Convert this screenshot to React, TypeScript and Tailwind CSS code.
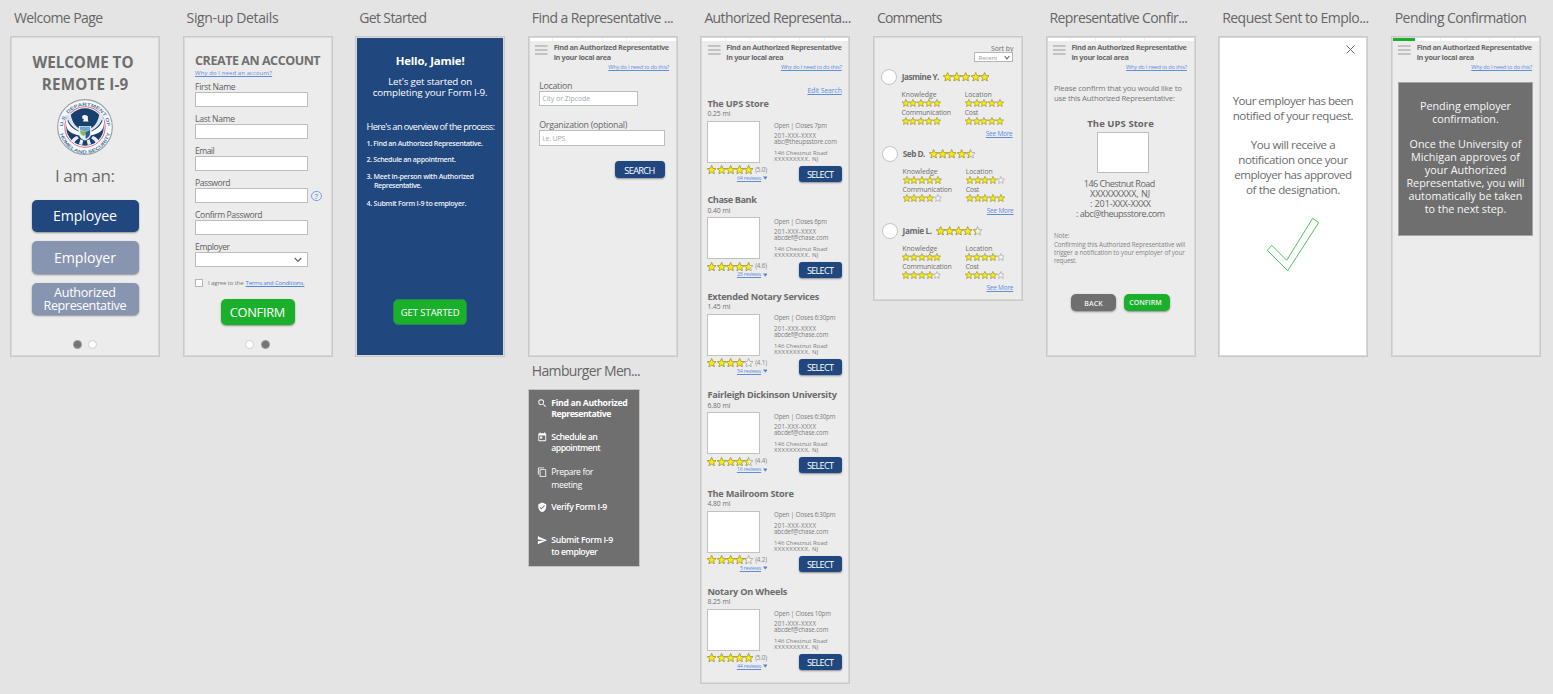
import React, { useLayoutEffect, useRef } from 'react';
import { MdSearch, MdToday, MdContentCopy, MdVerifiedUser, MdSend } from 'react-icons/md';

type LineProps = { w: number; className?: string; textClass?: string; children: React.ReactNode };

/* One line of text whose tracking is adjusted so that it spans w pixels. */
function Line({ w, className = '', textClass = '', children }: LineProps) {
  const ref = useRef<HTMLSpanElement>(null);
  useLayoutEffect(() => {
    const el = ref.current;
    if (!el) return;
    el.style.letterSpacing = '0px';
    el.style.marginRight = '0px';
    const n = (el.textContent || '').length;
    const spacing = (w - el.getBoundingClientRect().width) / Math.max(1, n - 1);
    el.style.letterSpacing = `${spacing}px`;
    el.style.marginRight = `${-spacing}px`;
  }, [w, children]);
  return (
    <div className={`flex shrink-0 items-center whitespace-nowrap leading-none ${className}`}>
      <span ref={ref} className={`pt-[0.8px] ${textClass}`}>{children}</span>
    </div>
  );
}

const STAR = 'M12 1.2l3.1 7.6 8.2.6-6.3 5.3 2 8-7-4.4-7 4.4 2-8L.7 9.4l8.2-.6z';

function Star({ fill, className }: { fill: number; className: string }) {
  return (
    <svg viewBox="0 0 24 24" className={`shrink-0 ${className}`}>
      <path d={STAR} fill="#f4f4f4" stroke="#8c8c86" strokeWidth="1.5" />
      {fill > 0 && (
        <svg x="0" y="0" width={24 * fill} height="24">
          <path d={STAR} fill="#fbea0c" stroke="#9a9430" strokeWidth="1.5" />
        </svg>
      )}
    </svg>
  );
}

function Stars({ value, className }: { value: number; className: string }) {
  return (
    <div className="flex items-center">
      {[0, 1, 2, 3, 4].map((i) => (
        <Star key={i} fill={Math.max(0, Math.min(1, value - i))} className={className} />
      ))}
    </div>
  );
}

function Artboard({ title, w, className, children }: { title: string; w: number; className: string; children: React.ReactNode }) {
  return (
    <div className="flex w-[150px] shrink-0 flex-col">
      <Line w={w} className="h-[36px] pl-[4px] text-[14px] text-[#666]">{title}</Line>
      <div className={`flex shrink-0 flex-col border border-[#c9c9c9] outline outline-1 -outline-offset-2 outline-[#d8d8d8] ${className}`}>{children}</div>
    </div>
  );
}

function Header({ active = false }: { active?: boolean }) {
  return (
    <div className="flex shrink-0 flex-col">
      <div className="flex h-[4px] bg-white">
        {[0, 1, 2, 3, 4, 5].map((i) => (
          <div key={i} className={`flex-1 border-r border-[#f1f1f1] ${active && i === 0 ? 'bg-[#1bb02b]' : 'bg-white'}`} />
        ))}
      </div>
      <div className="flex pl-[6.2px] pt-[1.7px]">
        <svg viewBox="0 0 13 10" className="mt-[2.3px] h-[10px] w-[13px] shrink-0">
          <path d="M0 1h12.6M0 5h12.6M0 9h12.6" stroke="#999" strokeWidth="1" />
        </svg>
        <div className="ml-[5.7px] flex flex-col text-[7.3px] font-bold text-[#6a6a6a]">
          <Line w={115.5} className="h-[10px]">Find an Authorized Representative</Line>
          <Line w={57.5} className="h-[10px]">in your local area</Line>
        </div>
      </div>
      <Line w={61} className="mt-[0.6px] h-[8px] justify-end pr-[7.5px] text-[5.6px] text-[#5f8ddd]" textClass="underline">Why do I need to do this?</Line>
    </div>
  );
}

function Seal() {
  return (
    <svg viewBox="0 0 100 100" className="mt-[3.5px] h-[56px] w-[56px] shrink-0 self-center">
      <defs>
        <path id="arcTop" d="M10.5 52 A39.5 39.5 0 1 1 89.5 52" />
        <path id="arcBottom" d="M4.5 52 A45.5 45.5 0 0 0 95.5 52" />
      </defs>
      <circle cx="50" cy="50" r="48.8" fill="#f7f8fa" stroke="#9b9fa4" strokeWidth="2" />
      <circle cx="50" cy="50" r="36" fill="#fff" stroke="#d9627a" strokeWidth="1.8" />
      <circle cx="50" cy="50" r="33.5" fill="#17406f" />
      <g fontFamily="Liberation Sans, sans-serif" fontSize="8.4" fontWeight="700" fill="#4d7da3">
        <text textLength="118" lengthAdjust="spacingAndGlyphs"><textPath href="#arcTop" startOffset="3">U.S. DEPARTMENT OF</textPath></text>
        <text textLength="124" lengthAdjust="spacingAndGlyphs"><textPath href="#arcBottom" startOffset="10">HOMELAND SECURITY</textPath></text>
      </g>
      <path d="M17 34c-2 9 0 17 3 22 6 6 13 8 20 9l2-6c-11-3-21-10-25-25zM83 34c2 9 0 17-3 22-6 6-13 8-20 9l-2-6c11-3 21-10 25-25z" fill="#fff" />
      <path d="M24 24c-3 1-5 4-6 8 4 12 11 20 21 25l1-4c-8-5-14-13-16-29zM76 24c3 1 5 4 6 8-4 12-11 20-21 25l-1-4c8-5 14-13 16-29z" fill="#dfe7ee" />
      <path d="M45 33c-1-3 2-5 6-4 4 0 5 3 4 6l1 6H46l2-5-3-1z" fill="#f4f6f8" />
      <path d="M38 44c4-4 8-4 12-4s8 0 12 4l-2 5H40z" fill="#17406f" />
      <path d="M36 66c-5 1-9 5-11 10l6 2c2-4 5-6 8-7zM64 66c5 1 9 5 11 10l-6 2c-2-4-5-6-8-7zM42 72l-3 9 6 1 2-8zM58 72l3 9-6 1-2-8z" fill="#e8eef3" />
      <path d="M39 48h22v13c0 7-5 11-11 13-6-2-11-6-11-13z" fill="#e9f1f5" />
      <path d="M41 49h18v6l-9 4-9-4z" fill="#6fa5cc" />
      <path d="M41 56l9 3 6-3-4 7-5 3-5-4z" fill="#8db653" />
      <path d="M51 60l8-5v6c0 5-4 8-8 10z" fill="#2b5f90" />
    </svg>
  );
}

function Dots({ first, className }: { first: boolean; className: string }) {
  const on = 'h-[9px] w-[9px] rounded-full bg-[#757575] border border-[#999]';
  const off = 'h-[9px] w-[9px] rounded-full bg-white border border-[#cfcfcf]';
  return (
    <div className={`flex justify-center gap-[6.8px] ${className}`}>
      <div className={first ? on : off} />
      <div className={first ? off : on} />
    </div>
  );
}

const SHADOW = 'shadow-[0_1px_2px_rgba(0,0,0,0.4)]';

function Field({ label, w, kind }: { label: string; w: number; kind?: string }) {
  return (
    <div className="flex h-[32.1px] shrink-0 flex-col">
      <Line w={w} className="h-[10px] text-[8.6px] text-[#5f5f5f]">{label}</Line>
      <div className="flex items-center gap-[3px]">
        <div className="flex h-[15px] w-[113px] items-center justify-end border border-[#bdbdbd] bg-white pr-[5px]">
          {kind === 'select' && (
            <svg viewBox="0 0 8 6" className="h-[6px] w-[8px]"><path d="M.8 1l3.2 3.4L7.2 1" fill="none" stroke="#666" strokeWidth="1.3" /></svg>
          )}
        </div>
        {kind === 'help' && (
          <div className="mt-[1px] flex h-[10.5px] w-[10.5px] items-center justify-center rounded-full border border-[#7a9fe4] text-[8px] leading-none text-[#5280d8]">?</div>
        )}
      </div>
    </div>
  );
}

const places = [
  { name: 'The UPS Store', nw: 61.5, mi: '0.25 mi', open: 'Open | Closes 7pm', ow: 53, mail: 'abc@theupsstore.com', mw: 63, rating: '(5.0)', value: 5, reviews: '64 reviews', rw: 24.5, h: 'h-[96.2px]' },
  { name: 'Chase Bank', nw: 49.5, mi: '0.40 mi', open: 'Open | Closes 6pm', ow: 53, mail: 'abcdef@chase.com', mw: 54.5, rating: '(4.6)', value: 4.65, reviews: '28 reviews', rw: 24.5, h: 'h-[96.6px]' },
  { name: 'Extended Notary Services', nw: 112, mi: '1.45 mi', open: 'Open | Closes 6:30pm', ow: 61.5, mail: 'abcdef@chase.com', mw: 54.5, rating: '(4.1)', value: 4.1, reviews: '54 reviews', rw: 24.5, h: 'h-[98.4px]' },
  { name: 'Fairleigh Dickinson University', nw: 129.5, mi: '6.80 mi', open: 'Open | Closes 6:30pm', ow: 61.5, mail: 'abcdef@chase.com', mw: 54.5, rating: '(4.4)', value: 4.5, reviews: '16 reviews', rw: 24.5, h: 'h-[98.4px]' },
  { name: 'The Mailroom Store', nw: 86.5, mi: '4.80 mi', open: 'Open | Closes 6:30pm', ow: 61.5, mail: 'abcdef@chase.com', mw: 54.5, rating: '(4.2)', value: 4.25, reviews: '5 reviews', rw: 21.5, h: 'h-[98.4px]' },
  { name: 'Notary On Wheels', nw: 80, mi: '8.25 mi', open: 'Open | Closes 10pm', ow: 57, mail: 'abcdef@chase.com', mw: 54.5, rating: '(5.0)', value: 5, reviews: '44 reviews', rw: 24.5, h: 'h-[90px]' },
];

function Place({ p }: { p: (typeof places)[number] }) {
  return (
    <div className={`flex shrink-0 flex-col pl-[6px] ${p.h}`}>
      <Line w={p.nw} className="h-[12px] text-[9.2px] font-bold text-[#6b6b6b]">{p.name}</Line>
      <Line w={23} className="h-[10px] text-[6.8px] text-[#707070]">{p.mi}</Line>
      <div className="mt-[1.5px] flex">
        <div className="flex w-[60px] flex-col">
          <div className="h-[42px] w-[52.5px] border border-[#c2c2c2] bg-white" />
          <div className="mt-[2.5px] flex h-[9px] items-center gap-[1.5px]">
            <Stars value={p.value} className="h-[9.3px] w-[9.25px]" />
            <Line w={12} className="h-[9px] text-[6.2px] text-[#858585]">{p.rating}</Line>
          </div>
          <div className="mt-[0.5px] flex items-center justify-end gap-[1.5px]">
            <Line w={p.rw} className="h-[7px] text-[5.4px] text-[#5f8ddd]" textClass="underline">{p.reviews}</Line>
            <svg viewBox="0 0 5 4" className="h-[4px] w-[4.5px]"><path d="M0 .2h5L2.5 4z" fill="#5585da" /></svg>
          </div>
        </div>
        <div className="ml-[6.6px] flex flex-col pt-[0.3px] text-[6.2px] text-[#7d7d7d]">
          <Line w={p.ow} className="h-[8px]">{p.open}</Line>
          <Line w={42} className="mt-[3.6px] h-[6px]">201-XXX-XXXX</Line>
          <Line w={p.mw} className="h-[6px]">{p.mail}</Line>
          <div className="mt-[5px] flex flex-col text-[6px]">
            <Line w={53.5} className="h-[6px]">146 Chestnut Road</Line>
            <Line w={44.5} className="h-[6px]">XXXXXXXXX, NJ</Line>
          </div>
          <Line w={27} className={`ml-[25px] mt-[4.3px] h-[16px] w-[43px] justify-center rounded-[3px] bg-[#21477f] text-[9.2px] text-white ${SHADOW}`}>SELECT</Line>
        </div>
      </div>
    </div>
  );
}

const comments = [
  { name: 'Jasmine Y.', w: 37.5, value: 5, scores: [5, 5, 5, 5], pl: 'pl-[7.3px]' },
  { name: 'Seb D.', w: 22.5, value: 4.5, scores: [5, 4, 4, 5], pl: 'pl-[8.3px]' },
  { name: 'Jamie L.', w: 29.5, value: 4.35, scores: [5, 4, 4, 4], pl: 'pl-[8px]' },
];

function Score({ label, w, value }: { label: string; w: number; value: number }) {
  return (
    <div className="flex h-[18px] w-[63.2px] flex-col">
      <Line w={w} className="h-[8px] text-[6.9px] text-[#707070]">{label}</Line>
      <div className="flex h-[8px] items-center"><Stars value={value} className="h-[8px] w-[7.8px]" /></div>
    </div>
  );
}

function Comment({ c }: { c: (typeof comments)[number] }) {
  return (
    <div className={`flex h-[77px] shrink-0 flex-col ${c.pl}`}>
      <div className="flex h-[15.6px] items-center">
        <div className="h-[15.6px] w-[15.6px] rounded-full border border-[#c4c4c4] bg-white" />
        <Line w={c.w} className="ml-[5px] h-[12px] pt-[0.4px] text-[8.2px] font-bold text-[#6b6b6b]">{c.name}</Line>
        <div className="ml-[3.5px]"><Stars value={c.value} className="h-[9.6px] w-[9.3px]" /></div>
      </div>
      <div className="ml-[20.3px] mt-[6.3px] flex w-[127px] flex-wrap self-start">
        <Score label="Knowledge" w={35} value={c.scores[0]} />
        <Score label="Location" w={27} value={c.scores[1]} />
        <Score label="Communication" w={49.5} value={c.scores[2]} />
        <Score label="Cost" w={13.5} value={c.scores[3]} />
      </div>
      <Line w={27} className="ml-[104.5px] mt-[2.3px] h-[8px] text-[6.5px] text-[#5f8ddd]" textClass="underline underline-offset-1">See More</Line>
    </div>
  );
}

const steps = [
  { icon: MdSearch, lines: [['Find an Authorized', 76.5], ['Representative', 60]], mt: 'mt-[8.4px]', h: 'h-[11px]', weight: 'font-bold' },
  { icon: MdToday, lines: [['Schedule an', 46.5], ['appointment', 49.5]], mt: 'mt-[12px]', h: 'h-[11px]', weight: 'font-semibold' },
  { icon: MdContentCopy, lines: [['Prepare for', 42], ['meeting', 31]], mt: 'mt-[12px]', h: 'h-[13px]', weight: 'font-normal' },
  { icon: MdVerifiedUser, lines: [['Verify Form I-9', 56]], mt: 'mt-[9.7px]', h: 'h-[11px]', weight: 'font-semibold' },
  { icon: MdSend, lines: [['Submit Form I-9', 62], ['to employer', 46.5]], mt: 'mt-[21.3px]', h: 'h-[12.3px]', weight: 'font-semibold' },
];

export default function App() {
  return (
    <main className="flex h-[694px] w-[1553px] gap-[22.6px] overflow-hidden bg-[#e4e4e4] pl-[10px] font-['Open_Sans','Noto_Sans',sans-serif]">
      <Artboard title="Welcome Page" w={89} className="h-[321px] bg-[#ececec]">
        <Line w={101} className="mt-[14px] h-[22px] justify-center pr-[4px] text-[15.2px] font-bold text-[#6e6e6e]">WELCOME TO</Line>
        <Line w={86.5} className="h-[22px] justify-center text-[15.2px] font-bold text-[#6e6e6e]">REMOTE I-9</Line>
        <div className="flex flex-col pt-[0.5px]"><Seal /></div>
        <Line w={60} className="mt-[8.5px] h-[24px] justify-center text-[17px] text-[#6b6b6b]">I am an:</Line>
        <div className="mt-[12.3px] flex flex-col items-center gap-[9.2px] text-white">
          <Line w={64} className={`h-[32.4px] w-[107px] justify-center rounded-[5px] bg-[#21477f] text-[14.2px] ${SHADOW}`}>Employee</Line>
          <Line w={62} className={`h-[32.4px] w-[107px] justify-center rounded-[5px] bg-[#8795b0] text-[14.2px] ${SHADOW}`}>Employer</Line>
          <div className={`flex h-[32.4px] w-[107px] flex-col justify-center rounded-[5px] bg-[#8795b0] text-[12.6px] ${SHADOW}`}>
            <Line w={62} className="h-[13px] justify-center">Authorized</Line>
            <Line w={83} className="h-[13px] justify-center">Representative</Line>
          </div>
        </div>
        <Dots first className="mt-[24.4px]" />
      </Artboard>

      <Artboard title="Sign-up Details" w={92} className="h-[321px] bg-[#ececec]">
        <div className="flex flex-col pl-[11.5px]">
          <Line w={125.5} className="mt-[16px] h-[16px] text-[12.5px] font-bold text-[#707070]">CREATE AN ACCOUNT</Line>
          <Line w={77} className="mb-[4.6px] h-[8px] text-[6px] text-[#5f8ddd]" textClass="underline">Why do I need an account?</Line>
          <Field label="First Name" w={40.5} />
          <Field label="Last Name" w={40} />
          <Field label="Email" w={19.5} />
          <Field label="Password" w={35.5} kind="help" />
          <Field label="Confirm Password" w={67.5} />
          <Field label="Employer" w={35} kind="select" />
          <div className="mt-[3.8px] flex h-[10px] items-center text-[6px]">
            <div className="h-[8px] w-[8px] border border-[#b5b5b5] bg-white" />
            <Line w={35.5} className="ml-[5px] text-[#777]">I agree to the</Line>
            <Line w={59} className="ml-[2px] text-[#4f83dd]" textClass="underline">Terms and Conditions.</Line>
          </div>
        </div>
        <Line w={55.5} className={`mt-[11px] h-[26px] w-[74px] justify-center self-center rounded-[5px] bg-[#1bb02b] text-[12.8px] text-white ${SHADOW}`}>CONFIRM</Line>
        <Dots first={false} className="mt-[15px]" />
      </Artboard>

      <Artboard title="Get Started" w={68} className="h-[321px] bg-[#21477f] text-white">
        <Line w={69} className="mt-[16px] h-[14px] justify-center text-[11.4px] font-bold">Hello, Jamie!</Line>
        <Line w={84} className="mt-[8.8px] h-[11px] justify-center text-[9.8px] font-medium">Let's get started on</Line>
        <Line w={115} className="h-[11px] justify-center text-[9.8px] font-medium">completing your Form I-9.</Line>
        <div className="flex flex-col pl-[10.3px] text-[7.1px] font-semibold text-[#eef1f6]">
          <Line w={128.6} className="mt-[22.2px] h-[12px] text-[9.2px] font-medium text-white">Here's an overview of the process:</Line>
          <Line w={116.5} className="mt-[6.2px] h-[9px]">1. Find an Authorized Representative.</Line>
          <Line w={89.5} className="mt-[7.8px] h-[9px]">2. Schedule an appointment.</Line>
          <Line w={107.5} className="mt-[8px] h-[9px]">3. Meet in-person with Authorized</Line>
          <Line w={48} className="h-[9px] pl-[7.5px]">Representative.</Line>
          <Line w={100} className="mt-[8.2px] h-[9px]">4. Submit Form I-9 to employer.</Line>
        </div>
        <Line w={59} className="mt-[91.8px] h-[26px] w-[74px] justify-center self-center rounded-[5px] border border-[#23894a] bg-[#1bb02b] text-[9.5px] font-medium">GET STARTED</Line>
      </Artboard>

      <div className="flex w-[150px] shrink-0 flex-col">
        <Artboard title="Find a Representative ..." w={142} className="h-[321px] bg-[#ececec]">
          <Header />
          <div className="flex flex-col pl-[10.5px]">
            <Line w={33} className="mt-[9.7px] h-[10px] text-[8.8px] text-[#666]">Location</Line>
            <Line w={48} className="h-[15px] w-[98.5px] border border-[#bdbdbd] bg-white pl-[2px] text-[7px] text-[#a2a8b2]">City or Zipcode</Line>
            <Line w={88} className="mt-[14px] h-[10px] text-[8.8px] text-[#666]">Organization (optional)</Line>
            <Line w={23} className="mt-[0.5px] h-[15.5px] w-[126px] border border-[#bdbdbd] bg-white pl-[2px] text-[7px] text-[#a2a8b2]">i.e. UPS</Line>
            <Line w={31} className={`ml-[75.5px] mt-[15px] h-[17.5px] w-[50px] justify-center rounded-[4px] bg-[#21477f] text-[9.2px] text-white ${SHADOW}`}>SEARCH</Line>
          </div>
        </Artboard>
        <Line w={109} className="h-[31.5px] pb-[5px] pl-[4px] text-[14px] text-[#666]">Hamburger Men...</Line>
        <div className="flex h-[178px] w-[111.8px] shrink-0 flex-col border border-[#c4c4c4] bg-[#6f6f6f] pl-[8px] text-[8.7px] text-white">
          {steps.map((s) => (
            <div key={String(s.lines[0][0])} className={`flex gap-[4px] ${s.mt} ${s.weight}`}>
              <div className={`flex items-center ${s.h}`}><s.icon className="h-[10.5px] w-[10.5px]" /></div>
              <div className="flex flex-col">
                {s.lines.map(([text, w]) => (
                  <Line key={String(text)} w={Number(w)} className={s.h}>{text}</Line>
                ))}
              </div>
            </div>
          ))}
        </div>
      </div>

      <Artboard title="Authorized Representa..." w={147} className="h-[648px] bg-[#ececec]">
        <Header />
        <Line w={34.5} className="mb-[1.8px] mt-[14.4px] h-[10px] justify-end pr-[7.5px] text-[6.9px] text-[#5f8ddd]" textClass="underline underline-offset-1">Edit Search</Line>
        {places.map((p) => <Place key={p.name} p={p} />)}
      </Artboard>

      <Artboard title="Comments" w={65.5} className="h-[265px] bg-[#ececec]">
        <div className="mt-[6.2px] flex flex-col items-end pr-[8.5px]">
          <Line w={22.5} className="h-[9px] text-[7px] text-[#707070]">Sort by</Line>
          <div className="flex h-[10px] w-[39px] items-center justify-between border border-[#b5b5b5] bg-white pl-[3px] pr-[2.5px]">
            <Line w={19} className="text-[6px] text-[#999]">Recent</Line>
            <svg viewBox="0 0 6 5" className="h-[5px] w-[6px]"><path d="M.6 1L3 3.8 5.4 1" fill="none" stroke="#666" strokeWidth="1.1" /></svg>
          </div>
        </div>
        <div className="mt-[7px] flex flex-col">
          {comments.map((c) => <Comment key={c.name} c={c} />)}
        </div>
      </Artboard>

      <Artboard title="Representative Confir..." w={138.5} className="h-[321px] bg-[#ececec]">
        <Header />
        <div className="mt-[12.2px] flex flex-col pl-[7.4px] text-[7.8px] text-[#777]">
          <Line w={128} className="h-[10px]">Please confirm that you would like to</Line>
          <Line w={121} className="h-[10px]">use this Authorized Representative:</Line>
        </div>
        <Line w={66.5} className="mt-[14.1px] h-[12px] justify-center text-[9.5px] font-bold text-[#666]">The UPS Store</Line>
        <div className="ml-[50px] mt-[2.4px] h-[41.5px] w-[52.5px] shrink-0 border border-[#bdbdbd] bg-white" />
        <div className="mt-[4.3px] flex flex-col text-[9px] text-[#666]">
          <Line w={71.5} className="h-[10px] justify-center pr-[2px]">146 Chestnut Road</Line>
          <Line w={60} className="h-[10px] justify-center pr-[1px]">XXXXXXXXX, NJ</Line>
          <Line w={61} className="h-[10px] justify-center">: 201-XXX-XXXX</Line>
          <Line w={89} className="h-[10px] justify-center">: abc@theupsstore.com</Line>
        </div>
        <div className="mt-[14px] flex flex-col pl-[7.4px] text-[6.3px] text-[#858585]">
          <Line w={15.5} className="h-[8.4px]">Note:</Line>
          <Line w={131.5} className="h-[8.4px]">Confirming this Authorized Representative will</Line>
          <Line w={131} className="h-[8.4px]">trigger a notification to your employer of your</Line>
          <Line w={22.7} className="h-[8.4px]">request.</Line>
        </div>
        <div className="mt-[29px] flex gap-[8px] pl-[24.2px] text-[7px] font-semibold text-[#f2f2f2]">
          <Line w={18.5} className={`h-[16.3px] w-[45.5px] justify-center rounded-[5px] bg-[#6f6f6f] pt-[1.6px] ${SHADOW}`}>BACK</Line>
          <Line w={32.5} className={`h-[16.3px] w-[45.5px] justify-center rounded-[5px] bg-[#1bb02b] pb-[0.8px] pr-[3px] ${SHADOW}`}>CONFIRM</Line>
        </div>
      </Artboard>

      <Artboard title="Request Sent to Emplo..." w={147} className="h-[321px] bg-white">
        <svg viewBox="0 0 9 9" className="mr-[11.7px] mt-[7.5px] h-[9px] w-[9px] shrink-0 self-end">
          <path d="M.5.5l8 8M8.5.5l-8 8" stroke="#666" strokeWidth="1" />
        </svg>
        <div className="mt-[39.6px] flex flex-col text-[11.6px] text-[#6b6b6b]">
          <Line w={121} className="h-[15px] justify-center">Your employer has been</Line>
          <Line w={121} className="h-[15px] justify-center">notified of your request.</Line>
          <Line w={85} className="mt-[13.9px] h-[14.9px] justify-center">You will receive a</Line>
          <Line w={110} className="h-[14.9px] justify-center">notification once your</Line>
          <Line w={118} className="h-[14.9px] justify-center">employer has approved</Line>
          <Line w={94.5} className="h-[14.9px] justify-center">of the designation.</Line>
        </div>
        <svg viewBox="1266 217 54 56" className="ml-[46.8px] mt-[20.2px] h-[56px] w-[54px] shrink-0">
          <path d="M1312.7 218.3l6 4.4-31 48-20.4-20.4 4.4-5 15 15z" fill="none" stroke="#4fc25e" strokeWidth="1" />
        </svg>
      </Artboard>

      <Artboard title="Pending Confirmation" w={132} className="h-[321px] bg-[#ececec]">
        <Header active />
        <div className="ml-[6px] mt-[10.7px] flex h-[154px] w-[135.5px] flex-col border border-[#a5a5a5] bg-[#6f6f6f] text-[10.8px] font-medium text-[#f7f7f7]">
          <Line w={91} className="mt-[16.7px] h-[12.6px] justify-center">Pending employer</Line>
          <Line w={66.5} className="h-[12.6px] justify-center">confirmation.</Line>
          <Line w={112} className="mt-[12.2px] h-[13px] justify-center">Once the University of</Line>
          <Line w={109} className="h-[13px] justify-center">Michigan approves of</Line>
          <Line w={81.5} className="h-[13px] justify-center">your Authorized</Line>
          <Line w={118} className="h-[13px] justify-center">Representative, you will</Line>
          <Line w={114} className="h-[13px] justify-center">automatically be taken</Line>
          <Line w={81.5} className="h-[13px] justify-center">to the next step.</Line>
        </div>
      </Artboard>
    </main>
  );
}
